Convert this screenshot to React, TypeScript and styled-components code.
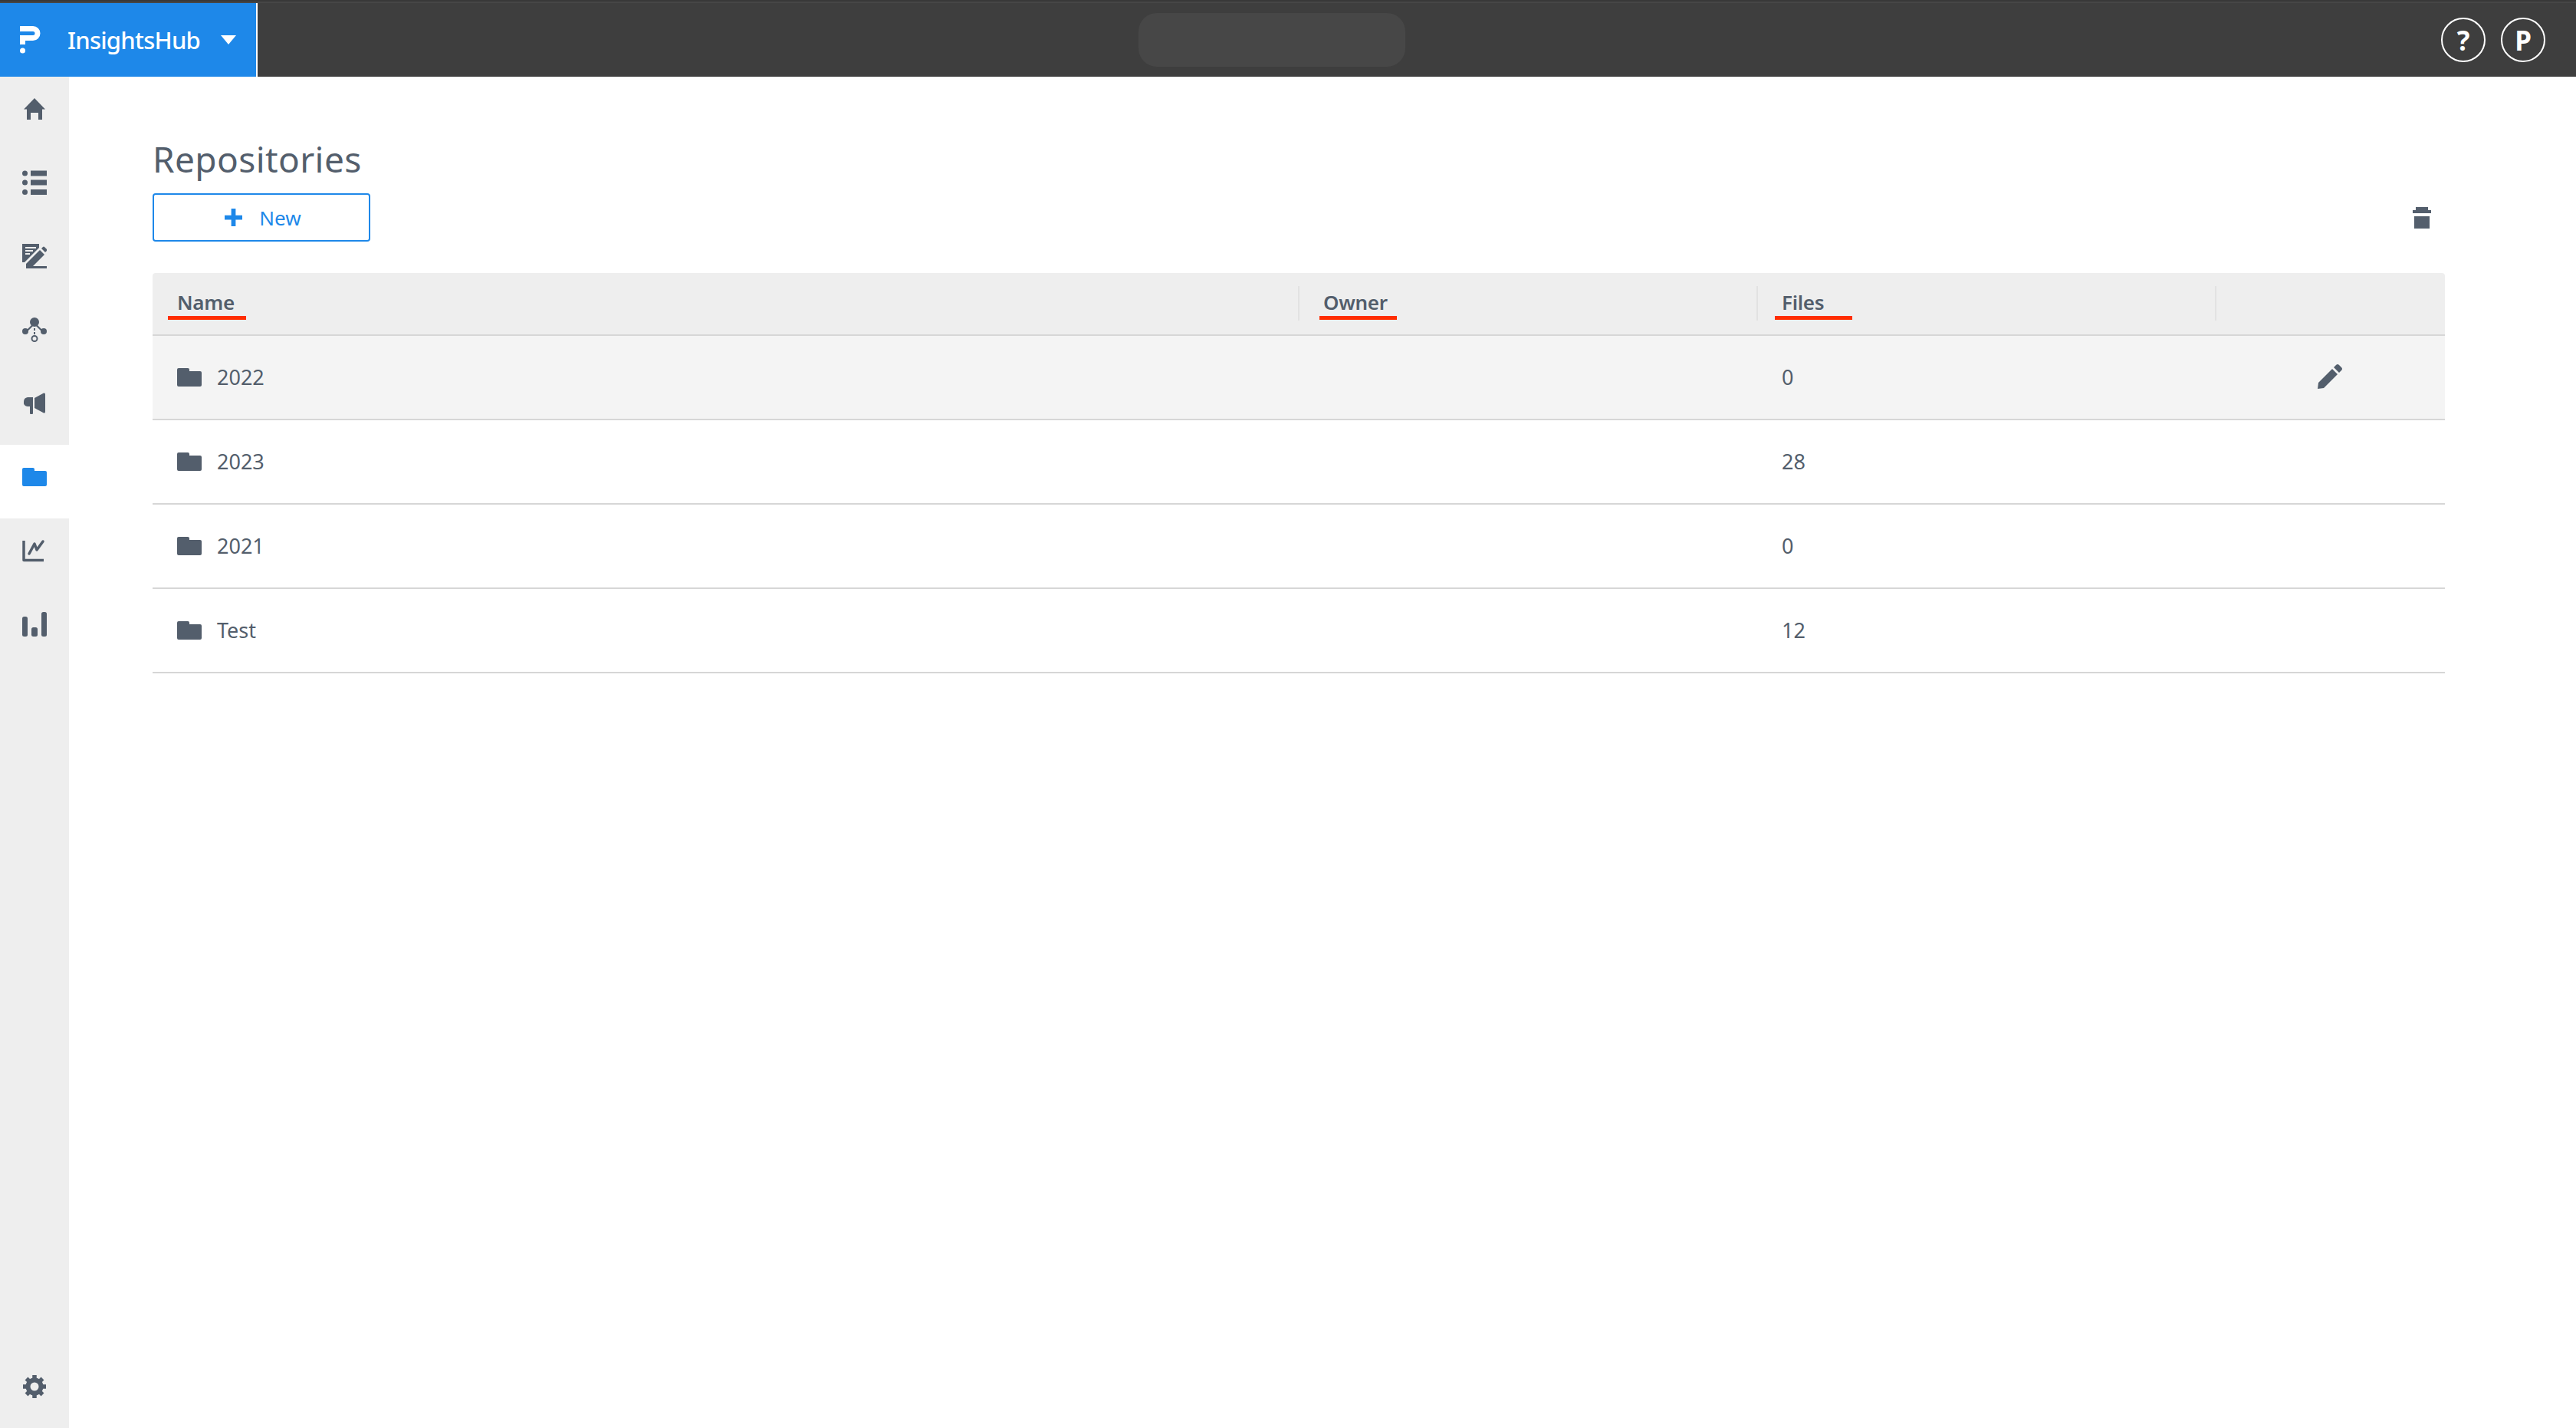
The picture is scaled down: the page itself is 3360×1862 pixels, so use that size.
import styled, { createGlobalStyle } from "styled-components";

const INK = "#535e6c";
const BLUE = "#1e88e9";

const GlobalStyle = createGlobalStyle`
  html, body {
    margin: 0;
    padding: 0;
    height: 100%;
    background: #fff;
    font-family: "Noto Sans", "Open Sans", sans-serif;
    color: ${INK};
  }
  * { box-sizing: border-box; }
`;

const Page = styled.div`
  display: flex;
  flex-direction: column;
  width: 3360px;
  height: 1862px;
  overflow: hidden;
`;

const TopBar = styled.header`
  display: flex;
  align-items: stretch;
  height: 100px;
  flex: none;
  padding-top: 2px;
  background: #3e3e3e;
  border-top: 2px solid #383838;
  box-shadow: inset 0 2px 0 #464646;
`;

const Brand = styled.div`
  display: flex;
  align-items: center;
  width: 336px;
  padding-left: 26px;
  background: ${BLUE};
  background-clip: padding-box;
  border-right: 2px solid #fff;
  color: #fff;
`;

const BrandName = styled.span`
  margin-left: 34px;
  font-size: 31px;
  font-weight: 500;
  letter-spacing: -0.75px;
`;

const Caret = styled.span`
  width: 0;
  height: 0;
  margin-left: 27px;
  border-left: 10px solid transparent;
  border-right: 10px solid transparent;
  border-top: 12px solid #fff;
`;

const TopCenter = styled.div`
  flex: 1;
  display: flex;
  align-items: center;
  padding-left: 1149px;
`;

const SearchPill = styled.div`
  width: 348px;
  height: 70px;
  border-radius: 24px;
  background: #474747;
`;

const TopActions = styled.div`
  display: flex;
  align-items: center;
  gap: 20px;
  padding-right: 40px;
`;

const RoundButton = styled.div`
  display: flex;
  align-items: center;
  justify-content: center;
  width: 58px;
  height: 58px;
  border: 2px solid #fff;
  border-radius: 50%;
  color: #fff;
  font-size: 35px;
  font-weight: 700;
`;

const Body = styled.div`
  flex: 1;
  display: flex;
  min-height: 0;
`;

const Sidebar = styled.nav`
  display: flex;
  flex-direction: column;
  width: 90px;
  flex: none;
  background: #eeeeee;
`;

const SideItem = styled.div<{ $active?: boolean; $bottom?: boolean }>`
  display: flex;
  align-items: center;
  justify-content: center;
  height: 96px;
  flex: none;
  padding-bottom: 12px;
  margin-top: ${({ $bottom }) => ($bottom ? "auto" : "0")};
  background: ${({ $active }) => ($active ? "#fff" : "transparent")};
  color: ${({ $active }) => ($active ? BLUE : INK)};
`;

const Main = styled.main`
  flex: 1;
  padding: 77px 171px 0 109px;
`;

const Title = styled.h1`
  margin: 0 0 15px;
  height: 60px;
  font-size: 46px;
  line-height: 60px;
  font-weight: 400;
  letter-spacing: 0.4px;
`;

const Toolbar = styled.div`
  display: flex;
  align-items: center;
  justify-content: space-between;
  padding-right: 18px;
  margin-bottom: 41px;
`;

const NewButton = styled.button`
  display: flex;
  align-items: center;
  justify-content: center;
  gap: 22px;
  width: 284px;
  height: 63px;
  padding: 0 0 0 4px;
  border: 2px solid ${BLUE};
  border-radius: 4px;
  background: #fff;
  color: ${BLUE};
  font: inherit;
  font-size: 26px;
`;

const Table = styled.div`
  display: flex;
  flex-direction: column;
`;

const Columns = styled.div`
  display: grid;
  grid-template-columns: 1494px 598px 598px 300px;
`;

const HeadRow = styled(Columns)`
  height: 82px;
  background: #eeeeee;
  border-bottom: 2px solid #d6d6d6;
  border-radius: 4px 4px 0 0;
`;

const HeadCell = styled.div<{ $first?: boolean }>`
  position: relative;
  display: flex;
  align-items: center;
  height: 45px;
  margin-top: 17px;
  padding: 0 0 4px ${({ $first }) => ($first ? "32px" : "31px")};
  border-left: ${({ $first }) => ($first ? "none" : "2px solid #e2e2e2")};
  font-size: 26px;
  font-weight: 600;
  letter-spacing: -0.3px;
`;

/* red marks drawn over the header labels */
const RedMark = styled.span<{ $left: number; $width: number }>`
  position: absolute;
  left: ${({ $left }) => $left}px;
  top: 39px;
  width: ${({ $width }) => $width}px;
  height: 5px;
  background: #ff2d00;
`;

const Row = styled(Columns)<{ $hover?: boolean }>`
  height: 110px;
  align-items: center;
  background: ${({ $hover }) => ($hover ? "#f4f4f4" : "#fff")};
  border-bottom: 2px solid #d6d6d6;
  font-size: 27px;
`;

const NameCell = styled.div`
  display: flex;
  align-items: center;
  gap: 20px;
  padding-left: 32px;
`;

const CellText = styled.span`
  display: block;
  padding-bottom: 2px;
`;

const FilesCell = styled.div`
  padding-left: 33px;
`;

const ActionCell = styled.div`
  display: flex;
  padding: 0 0 3px 134px;
`;

const FolderIcon = () => (
  <svg width="32" height="32" viewBox="0 0 32 32" fill="currentColor">
    <path d="M2 4h12a2 2 0 0 1 2 2v2h14a2 2 0 0 1 2 2v16a2 2 0 0 1-2 2H2a2 2 0 0 1-2-2V6a2 2 0 0 1 2-2z" />
  </svg>
);

const LogoMark = () => (
  <svg width="28" height="36" viewBox="0 0 28 36" fill="none">
    <path d="M0 3.500h17a6 6 0 0 1 0 12H3.500V24" stroke="#fff" strokeWidth="7" />
    <circle cx="3.500" cy="32" r="3.500" fill="#fff" />
  </svg>
);

const HomeIcon = () => (
  <svg width="32" height="32" viewBox="0 0 32 32" fill="currentColor">
    <path d="M16 2 30 16.500h-4V30h-5v-9H11v9H6V16.500H2z" />
  </svg>
);

const ListIcon = () => (
  <svg width="32" height="32" viewBox="0 0 32 32" fill="currentColor">
    <circle cx="3.500" cy="4" r="3.500" />
    <circle cx="3.500" cy="16" r="3.500" />
    <circle cx="3.500" cy="28.500" r="3.500" />
    <rect x="11" y="0.500" width="21" height="7" />
    <rect x="11" y="12.500" width="21" height="7" />
    <rect x="11" y="25" width="21" height="7" />
  </svg>
);

const NotesIcon = () => (
  <svg width="32" height="32" viewBox="0 0 32 32" fill="currentColor">
    <path
      fillRule="evenodd"
      d="M0 0h22v5L3 24H0zM4 4v2h14V4zM4 8v2h10V8zM4 12v2h6v-2z"
    />
    <path d="M5 32v-6L23 8l6 6-18 18z" />
    <path d="M25 6l2-2q1-1 2 0l3 3q1 1 0 2l-2 2z" />
    <rect x="11" y="29" width="21" height="3" />
  </svg>
);

const NetworkIcon = () => (
  <svg width="32" height="32" viewBox="0 0 32 32" fill="currentColor">
    <circle cx="16" cy="6" r="6" />
    <circle cx="4" cy="18" r="4" />
    <circle cx="28" cy="18" r="4" />
    <path d="M5 17 15 7l1.500 1.500L6.500 18.500zM27 17 17 7l-1.500 1.500 10 10z" />
    <rect x="15" y="14" width="2" height="3" />
    <rect x="15" y="19" width="2" height="3" />
    <circle cx="16" cy="27.500" r="3.500" fill="none" stroke="currentColor" strokeWidth="2" />
  </svg>
);

const MegaphoneIcon = () => (
  <svg width="28" height="28" viewBox="0 0 28 28" fill="currentColor">
    <path d="M14 7 26 0.500q2-.500 2 1.500v23q0 2-2 1.500L14 20z" />
    <path d="M5 6h7v21q0 1-1 1H9q-1 0-1-1v-9H5a5 5 0 0 1-5-6 6 6 0 0 1 5-6z" />
  </svg>
);

const ChartIcon = () => (
  <svg width="32" height="32" viewBox="0 0 32 32" fill="none" stroke="currentColor" strokeLinecap="round" strokeLinejoin="round">
    <path d="M2 3v25.500h26" strokeWidth="3.500" strokeLinecap="butt" />
    <path d="M9 20l7-13 3 8 8-11" strokeWidth="3.500" />
  </svg>
);

const BarsIcon = () => (
  <svg width="32" height="32" viewBox="0 0 32 32" fill="currentColor">
    <rect x="0" y="6" width="7" height="26" rx="2.500" />
    <rect x="12" y="20" width="8" height="12" rx="2.500" />
    <rect x="25" y="0" width="7" height="32" rx="2.500" />
  </svg>
);

const GearIcon = () => (
  <svg width="30" height="30" viewBox="0 0 30 30">
    <circle cx="15" cy="15" r="8.500" fill="none" stroke="currentColor" strokeWidth="6" />
    <g stroke="currentColor" strokeWidth="5.500">
      <path d="M15 0v5M15 25v5M0 15h5M25 15h5M4.500 4.500l3.500 3.500M22 22l3.500 3.500M25.500 4.500 22 8M8 22l-3.500 3.500" />
    </g>
  </svg>
);

const TrashIcon = () => (
  <svg width="24" height="28" viewBox="0 0 24 28" fill="currentColor">
    <path d="M4 0h16v4h4v4H0V4h4zM2 12h20v16H2z" />
  </svg>
);

const PencilIcon = () => (
  <svg width="32" height="32" viewBox="0 0 32 32" fill="currentColor">
    <path d="M0 32l1-8L19 6l7 7L8 31z" />
    <path d="M21 4l3-3q2-2 4 0l3 3q2 2 0 4l-3 3z" />
  </svg>
);

const PlusIcon = () => (
  <svg width="23" height="23" viewBox="0 0 24 24" fill="currentColor">
    <path d="M9 0h6v9h9v6h-9v9H9v-9H0V9h9z" />
  </svg>
);

const navItems = [
  { key: "home", icon: <HomeIcon /> },
  { key: "list", icon: <ListIcon /> },
  { key: "notes", icon: <NotesIcon /> },
  { key: "network", icon: <NetworkIcon /> },
  { key: "campaign", icon: <MegaphoneIcon /> },
  { key: "repos", icon: <FolderIcon />, active: true },
  { key: "chart", icon: <ChartIcon /> },
  { key: "bars", icon: <BarsIcon /> },
];

const repositories = [
  { name: "2022", files: 0, hover: true },
  { name: "2023", files: 28 },
  { name: "2021", files: 0 },
  { name: "Test", files: 12 },
];

export default function App() {
  return (
    <>
      <GlobalStyle />
      <Page>
        <TopBar>
          <Brand>
            <LogoMark />
            <BrandName>InsightsHub</BrandName>
            <Caret />
          </Brand>
          <TopCenter>
            <SearchPill />
          </TopCenter>
          <TopActions>
            <RoundButton>?</RoundButton>
            <RoundButton>P</RoundButton>
          </TopActions>
        </TopBar>
        <Body>
          <Sidebar>
            {navItems.map((item) => (
              <SideItem key={item.key} $active={item.active}>
                {item.icon}
              </SideItem>
            ))}
            <SideItem $bottom>
              <GearIcon />
            </SideItem>
          </Sidebar>
          <Main>
            <Title>Repositories</Title>
            <Toolbar>
              <NewButton>
                <PlusIcon />
                New
              </NewButton>
              <TrashIcon />
            </Toolbar>
            <Table>
              <HeadRow>
                <HeadCell $first>
                  Name
                  <RedMark $left={20} $width={102} />
                </HeadCell>
                <HeadCell>
                  Owner
                  <RedMark $left={26} $width={101} />
                </HeadCell>
                <HeadCell>
                  Files
                  <RedMark $left={22} $width={101} />
                </HeadCell>
                <HeadCell />
              </HeadRow>
              {repositories.map((repo) => (
                <Row key={repo.name} $hover={repo.hover}>
                  <NameCell>
                    <FolderIcon />
                    <CellText>{repo.name}</CellText>
                  </NameCell>
                  <div />
                  <FilesCell>
                    <CellText>{repo.files}</CellText>
                  </FilesCell>
                  <ActionCell>{repo.hover && <PencilIcon />}</ActionCell>
                </Row>
              ))}
            </Table>
          </Main>
        </Body>
      </Page>
    </>
  );
}
